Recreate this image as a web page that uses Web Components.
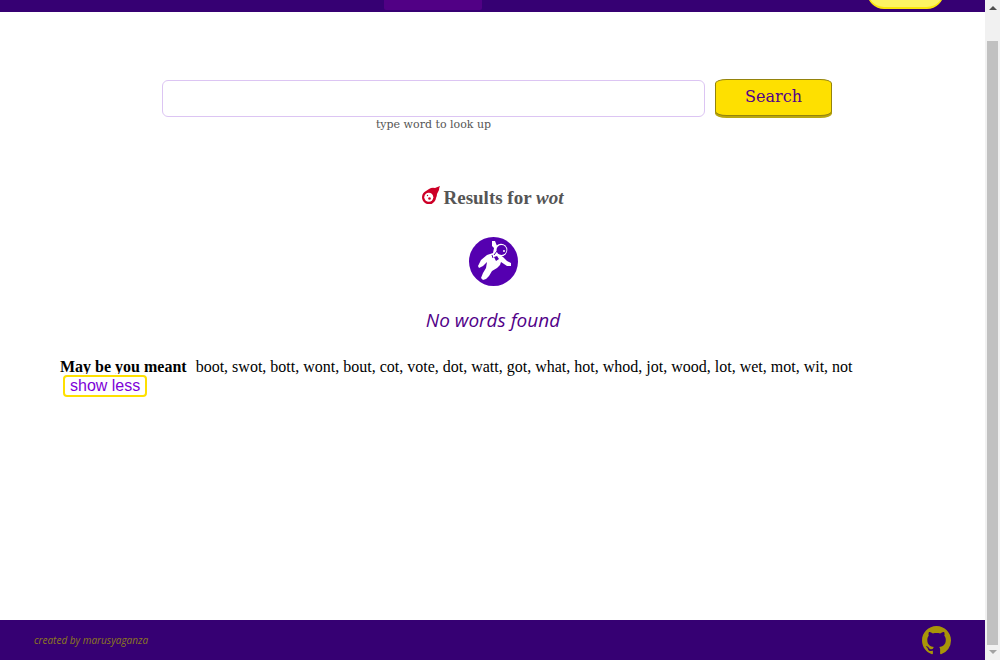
<!DOCTYPE html>
<html lang="en">
<head>
<meta charset="utf-8">
<title>Dictionary search</title>
<style>
  body { margin: 0; background: #fff; }
</style>
</head>
<body>
<dict-app></dict-app>
<script>
const define = (name, html) => customElements.define(name, class extends HTMLElement {
  constructor() {
    super();
    this.attachShadow({ mode: 'open' }).innerHTML = html;
  }
});

define('site-header', `
<style>
  :host { display: block; height: 12px; background: #360073; overflow: hidden; }
  nav { display: grid; grid-template: 100% / 1fr auto 1fr; align-items: end; padding: 0 41px 0 0; height: 100%; box-sizing: border-box; }
  .tab { width: 98px; height: 40px; margin: 0 78px 2px 0; background: #510085; border-radius: 2px; grid-column: 2; }
  .login { box-sizing: border-box; width: 77px; height: 36px; margin: 0 0 3px; padding: 0; justify-self: end; background: #fdf463; border: 0 solid #fbe60b; border-width: 1px 1px 2px; border-radius: 17px; }
</style>
<nav aria-label="Main"><a class="tab" href="#" aria-label="Dictionary"></a><button class="login" aria-label="Log in"></button></nav>`);

define('search-form', `
<style>
  :host { display: block; }
  form { display: grid; grid-template-columns: 1fr 117px; gap: 0 10px; max-width: 670px; margin: 0 auto; padding-left: 9px; font-family: "DejaVu Serif", serif; }
  input { box-sizing: border-box; width: 100%; height: 37px; margin: 1px 0 0; padding: 0 12px; border: 1px solid #dcc5f3; border-radius: 6px; background: #fff; font: 16px "DejaVu Serif", serif; outline: 0; }
  label { text-align: center; font-size: 11px; line-height: 15px; color: #555; }
  button { box-sizing: border-box; height: 37px; padding: 0 0 2px; background: #fee000; border: 1px solid #94830c; border-radius: 10% / 12%; box-shadow: 0 2px 0 #b9a60f; color: #52008b; font: 16px "DejaVu Serif", serif; }
</style>
<form onsubmit="return false"><input id="word" type="text"><button>Search</button><label for="word">type word to look up</label></form>`);

define('result-title', `
<style>
  :host { display: flex; justify-content: center; align-items: flex-start; gap: 4px; }
  h2 { margin: 0; font: bold 19px/24px "Liberation Serif", serif; color: #555; }
  svg { flex: none; }
</style>
<svg width="18" height="18" viewBox="0 0 18 18" aria-hidden="true"><path fill="#cd0027" d="M18 0Q17 2 17 4L15 8Q15 10 14 12A7 7 0 1 1 4 5L7 3Q10 1 13 2Z"/><circle cx="6.800" cy="11.200" r="4.500" fill="#fff"/><circle cx="5.500" cy="9.500" r=".7" fill="#cd0027"/><circle cx="7.500" cy="12.500" r="1.300" fill="#cd0027"/></svg>
<h2><slot></slot></h2>`);

define('empty-state', `
<style>
  :host { display: flex; flex-direction: column; align-items: center; padding-left: 1px; }
  p { margin: 20px 0 0; font: italic 19px/28px "Open Sans", sans-serif; color: #510088; }
</style>
<svg width="49" height="49" viewBox="0 0 49 49" aria-hidden="true">
  <circle cx="24.500" cy="24.500" r="24.500" fill="#5500b0"/>
  <path fill="#fff" d="M23 4L26 4 28 9 27 12 28 16 34 20 38 24 42 26 42 29 38 29 32 25 31 28 28 31 23 34 20 39 17 42 14 43 12 41 14 36 17 31 18 25 14 29 10 31 9 29 12 23 18 18 24 16 25 11 23 9Z"/>
  <circle cx="32" cy="13" r="6.300" fill="#fff"/><circle cx="32.500" cy="13" r="5" fill="#5500b0"/>
  <circle cx="35" cy="14" r="1" fill="#fff"/>
  <path d="M25 20l3-1 2 3-3 2z" fill="#5500b0"/><path d="M28 14l-3 4M23 18l1 3" stroke="#5500b0" fill="none"/>
</svg>
<p><slot></slot></p>`);

define('word-suggestions', `
<style>
  :host { display: block; font: 16px/18px "Liberation Serif", serif; color: #000; }
  b { margin-right: 5px; }
  button { box-sizing: border-box; position: relative; height: 22px; margin: -1px 3px 0; padding: 0 5px; background: #fff; border: 2px solid #fee000; border-radius: 4px; box-shadow: 0 0 0 1px #fff; color: #7d00d8; font: 16px/18px "Liberation Sans", sans-serif; }
</style>
<b>May be you meant</b> <slot></slot> <button>show less</button>`);

define('site-footer', `
<style>
  :host { display: flex; box-sizing: border-box; height: 40px; align-items: center; justify-content: space-between; padding: 0 34px; background: #360073; }
  span { font: italic 10px/16px "Open Sans", sans-serif; color: #8d7a20; }
  a { display: block; height: 29px; }
</style>
<span>created by marusyaganza</span>
<a href="#" aria-label="GitHub"><svg width="29" height="29" viewBox="0 0 16 16"><path fill="#a99508" d="M8 0C3.580 0 0 3.580 0 8c0 3.540 2.290 6.530 5.470 7.590.4.070.55-.17.55-.38 0-.19-.01-.82-.01-1.490-2.010.37-2.530-.49-2.690-.94-.09-.23-.48-.94-.82-1.130-.28-.15-.68-.52-.01-.53.63-.01 1.080.58 1.230.82.72 1.210 1.870.87 2.330.66.07-.52.28-.87.51-1.070-1.780-.2-3.640-.89-3.640-3.950 0-.87.31-1.590.82-2.150-.08-.2-.36-1.020.08-2.120 0 0 .67-.21 2.200.82.64-.18 1.320-.27 2-.27s1.360.09 2 .27c1.530-1.040 2.200-.82 2.200-.82.44 1.100.16 1.920.08 2.120.51.56.82 1.270.82 2.150 0 3.070-1.870 3.750-3.650 3.950.29.25.54.73.54 1.480 0 1.070-.01 1.930-.01 2.200 0 .21.15.46.55.38A8 8 0 0 0 16 8c0-4.420-3.580-8-8-8z"/></svg></a>`);

define('scroll-rail', `
<style>
  :host { display: flex; flex-direction: column; align-items: center; background: #f1f1f1; }
  i { flex: 1; width: 11px; background: #c1c1c1; }
  svg { flex: none; }
</style>
<svg width="15" height="41"><path fill="#505050" d="M4 10h8l-4-4z"/></svg><i></i><svg width="15" height="15"><path fill="#a3a3a3" d="M4 5h8l-4 4z"/></svg>`);

define('dict-app', `
<style>
  :host { display: grid; grid-template-columns: 1fr 15px; min-height: 100vh; }
  .page { display: flex; flex-direction: column; }
  main { flex: 1; padding: 67px 60px 40px; }
  result-title { margin-top: 54px; }
  empty-state { margin-top: 27px; }
  word-suggestions { margin-top: 24px; }
</style>
<div class="page">
  <site-header></site-header>
  <main>
    <search-form></search-form>
    <result-title>Results for <em>wot</em></result-title>
    <empty-state>No words found</empty-state>
    <word-suggestions>boot, swot, bott, wont, bout, cot, vote, dot, watt, got, what, hot, whod, jot, wood, lot, wet, mot, wit, not</word-suggestions>
  </main>
  <site-footer></site-footer>
</div>
<scroll-rail></scroll-rail>`);
</script>
</body>
</html>
